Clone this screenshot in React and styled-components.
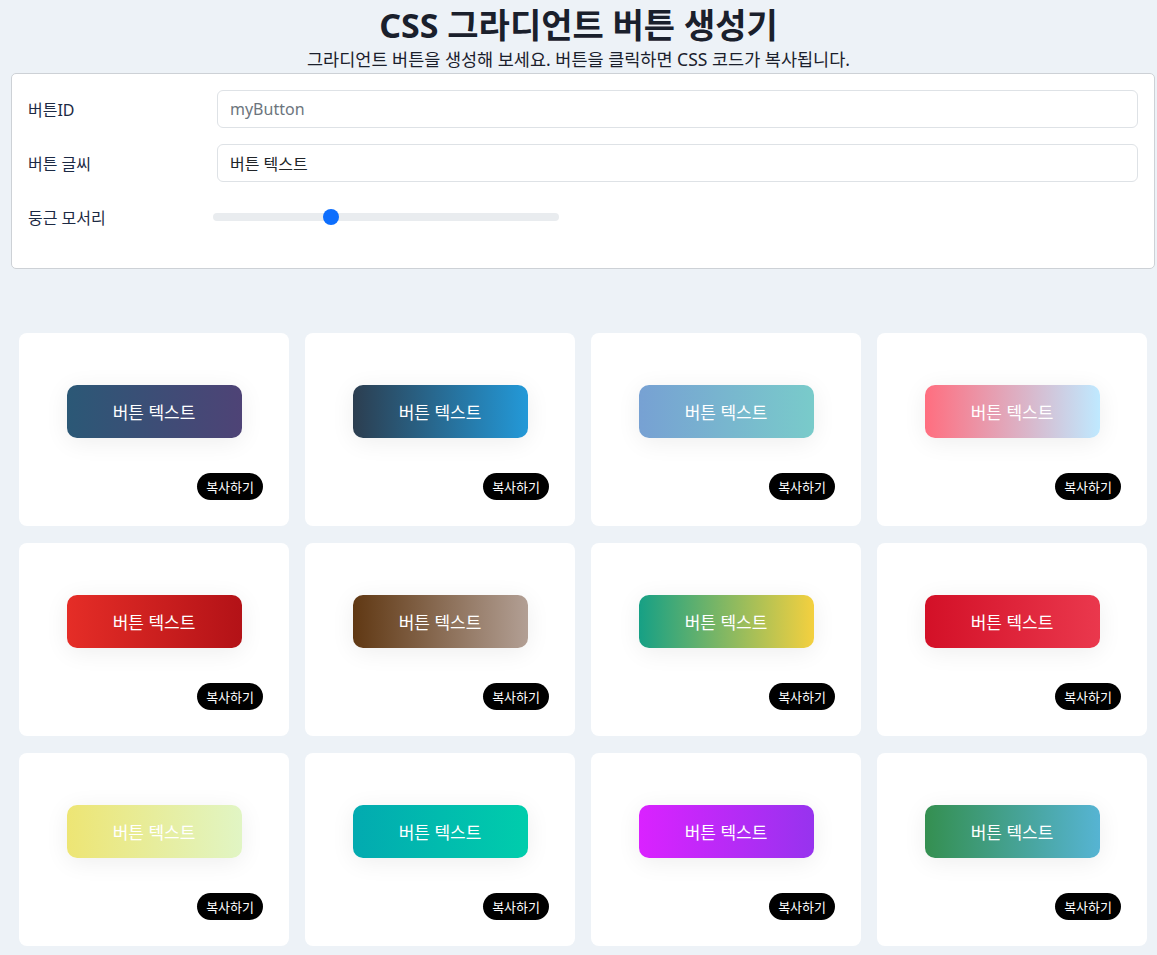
import React, { useState } from 'react';
import styled, { createGlobalStyle } from 'styled-components';

const GlobalStyle = createGlobalStyle`
  body {
    margin: 0;
    background: #edf2f7;
    font-family: "Noto Sans", "Noto Sans CJK KR", sans-serif;
    color: #212529;
  }
`;

const gradients = [
  ['#2b5876', '#4e4376'],
  ['#2c3e50', '#2399d8'],
  ['#77a1d3', '#79cbca'],
  ['#ff6e7f', '#bfe9ff'],
  ['#e52d27', '#b31217'],
  ['#603813', '#b29f94'],
  ['#16a085', '#f4d03f'],
  ['#d31027', '#ea384d'],
  ['#ede574', '#e1f5c4'],
  ['#02aab0', '#00cdac'],
  ['#da22ff', '#9733ee'],
  ['#348f50', '#56b4d3'],
];

const App = () => {
  const [buttonId, setButtonId] = useState('');
  const [label, setLabel] = useState('버튼 텍스트');
  const [radius, setRadius] = useState(10);

  return (
    <>
      <GlobalStyle />
      <Header>
        <Title>CSS 그라디언트 버튼 생성기</Title>
        <Subtitle>그라디언트 버튼을 생성해 보세요. 버튼을 클릭하면 CSS 코드가 복사됩니다.</Subtitle>
      </Header>

      <FormCard>
        <FormRow>
          <Label>버튼ID</Label>
          <TextInput
            placeholder="myButton"
            value={buttonId}
            onChange={(e) => setButtonId(e.target.value)}
          />
        </FormRow>
        <FormRow>
          <Label>버튼 글씨</Label>
          <TextInput value={label} onChange={(e) => setLabel(e.target.value)} />
        </FormRow>
        <FormRow>
          <Label>둥근 모서리</Label>
          <Range
            type="range"
            min="0"
            max="30"
            value={radius}
            onChange={(e) => setRadius(Number(e.target.value))}
          />
        </FormRow>
      </FormCard>

      <Grid>
        {gradients.map(([from, to], i) => (
          <Card key={i}>
            <GradientButton from={from} to={to} radius={radius}>
              {label}
            </GradientButton>
            <CopyButton>복사하기</CopyButton>
          </Card>
        ))}
      </Grid>
    </>
  );
};

const Header = styled.header`
  text-align: center;
  padding-top: 5px;
`;

const Title = styled.h1`
  margin: 0;
  font-size: 34px;
  line-height: 41px;
  font-weight: 700;
  color: #1a202c;
`;

const Subtitle = styled.p`
  margin: 3px 0 0;
  font-size: 17.5px;
  line-height: 21px;
  color: #1a202c;
`;

const FormCard = styled.section`
  margin: 3px 2px 0 11px;
  padding: 16px;
  background: #fff;
  border: 1px solid #cdd1d6;
  border-radius: 5px;
`;

const FormRow = styled.div`
  display: grid;
  grid-template-columns: 189px 1fr;
  align-items: center;
  height: 38px;
  margin-bottom: 16px;
`;

const Label = styled.label`
  font-size: 16px;
  color: #1c2a44;
`;

const TextInput = styled.input`
  box-sizing: border-box;
  height: 38px;
  padding: 0 12px;
  border: 1px solid #dee2e6;
  border-radius: 6px;
  font-family: inherit;
  font-size: 16px;
  color: #212529;
  outline: none;

  &::placeholder {
    color: #6c757d;
  }
`;

const Range = styled.input`
  appearance: none;
  -webkit-appearance: none;
  width: 346px;
  height: 8px;
  margin: 0 0 0 -4px;
  border-radius: 4px;
  background: #e9ecef;
  outline: none;

  &::-webkit-slider-thumb {
    -webkit-appearance: none;
    width: 16px;
    height: 16px;
    border-radius: 50%;
    background: #0d6efd;
    border: none;
    cursor: pointer;
  }
`;

const Grid = styled.main`
  display: grid;
  grid-template-columns: repeat(4, 270px);
  gap: 17px 16px;
  padding: 64px 10px 8px 19px;
`;

const Card = styled.div`
  display: flex;
  flex-direction: column;
  align-items: center;
  height: 193px;
  box-sizing: border-box;
  padding: 52px 26px 26px;
  background: #fff;
  border-radius: 8px;
`;

const GradientButton = styled.button`
  width: 175px;
  height: 53px;
  border: none;
  border-radius: ${(p) => p.radius}px;
  background: linear-gradient(to right, ${(p) => p.from}, ${(p) => p.to});
  box-shadow: 0 4px 24px rgba(0, 0, 0, 0.07);
  color: #fff;
  font-family: inherit;
  font-size: 17px;
  cursor: pointer;
`;

const CopyButton = styled.button`
  align-self: flex-end;
  margin-top: auto;
  height: 27px;
  padding: 0 9px;
  border: none;
  border-radius: 14px;
  background: #000;
  color: #fff;
  font-family: inherit;
  font-size: 13px;
  cursor: pointer;
`;

export default App;
